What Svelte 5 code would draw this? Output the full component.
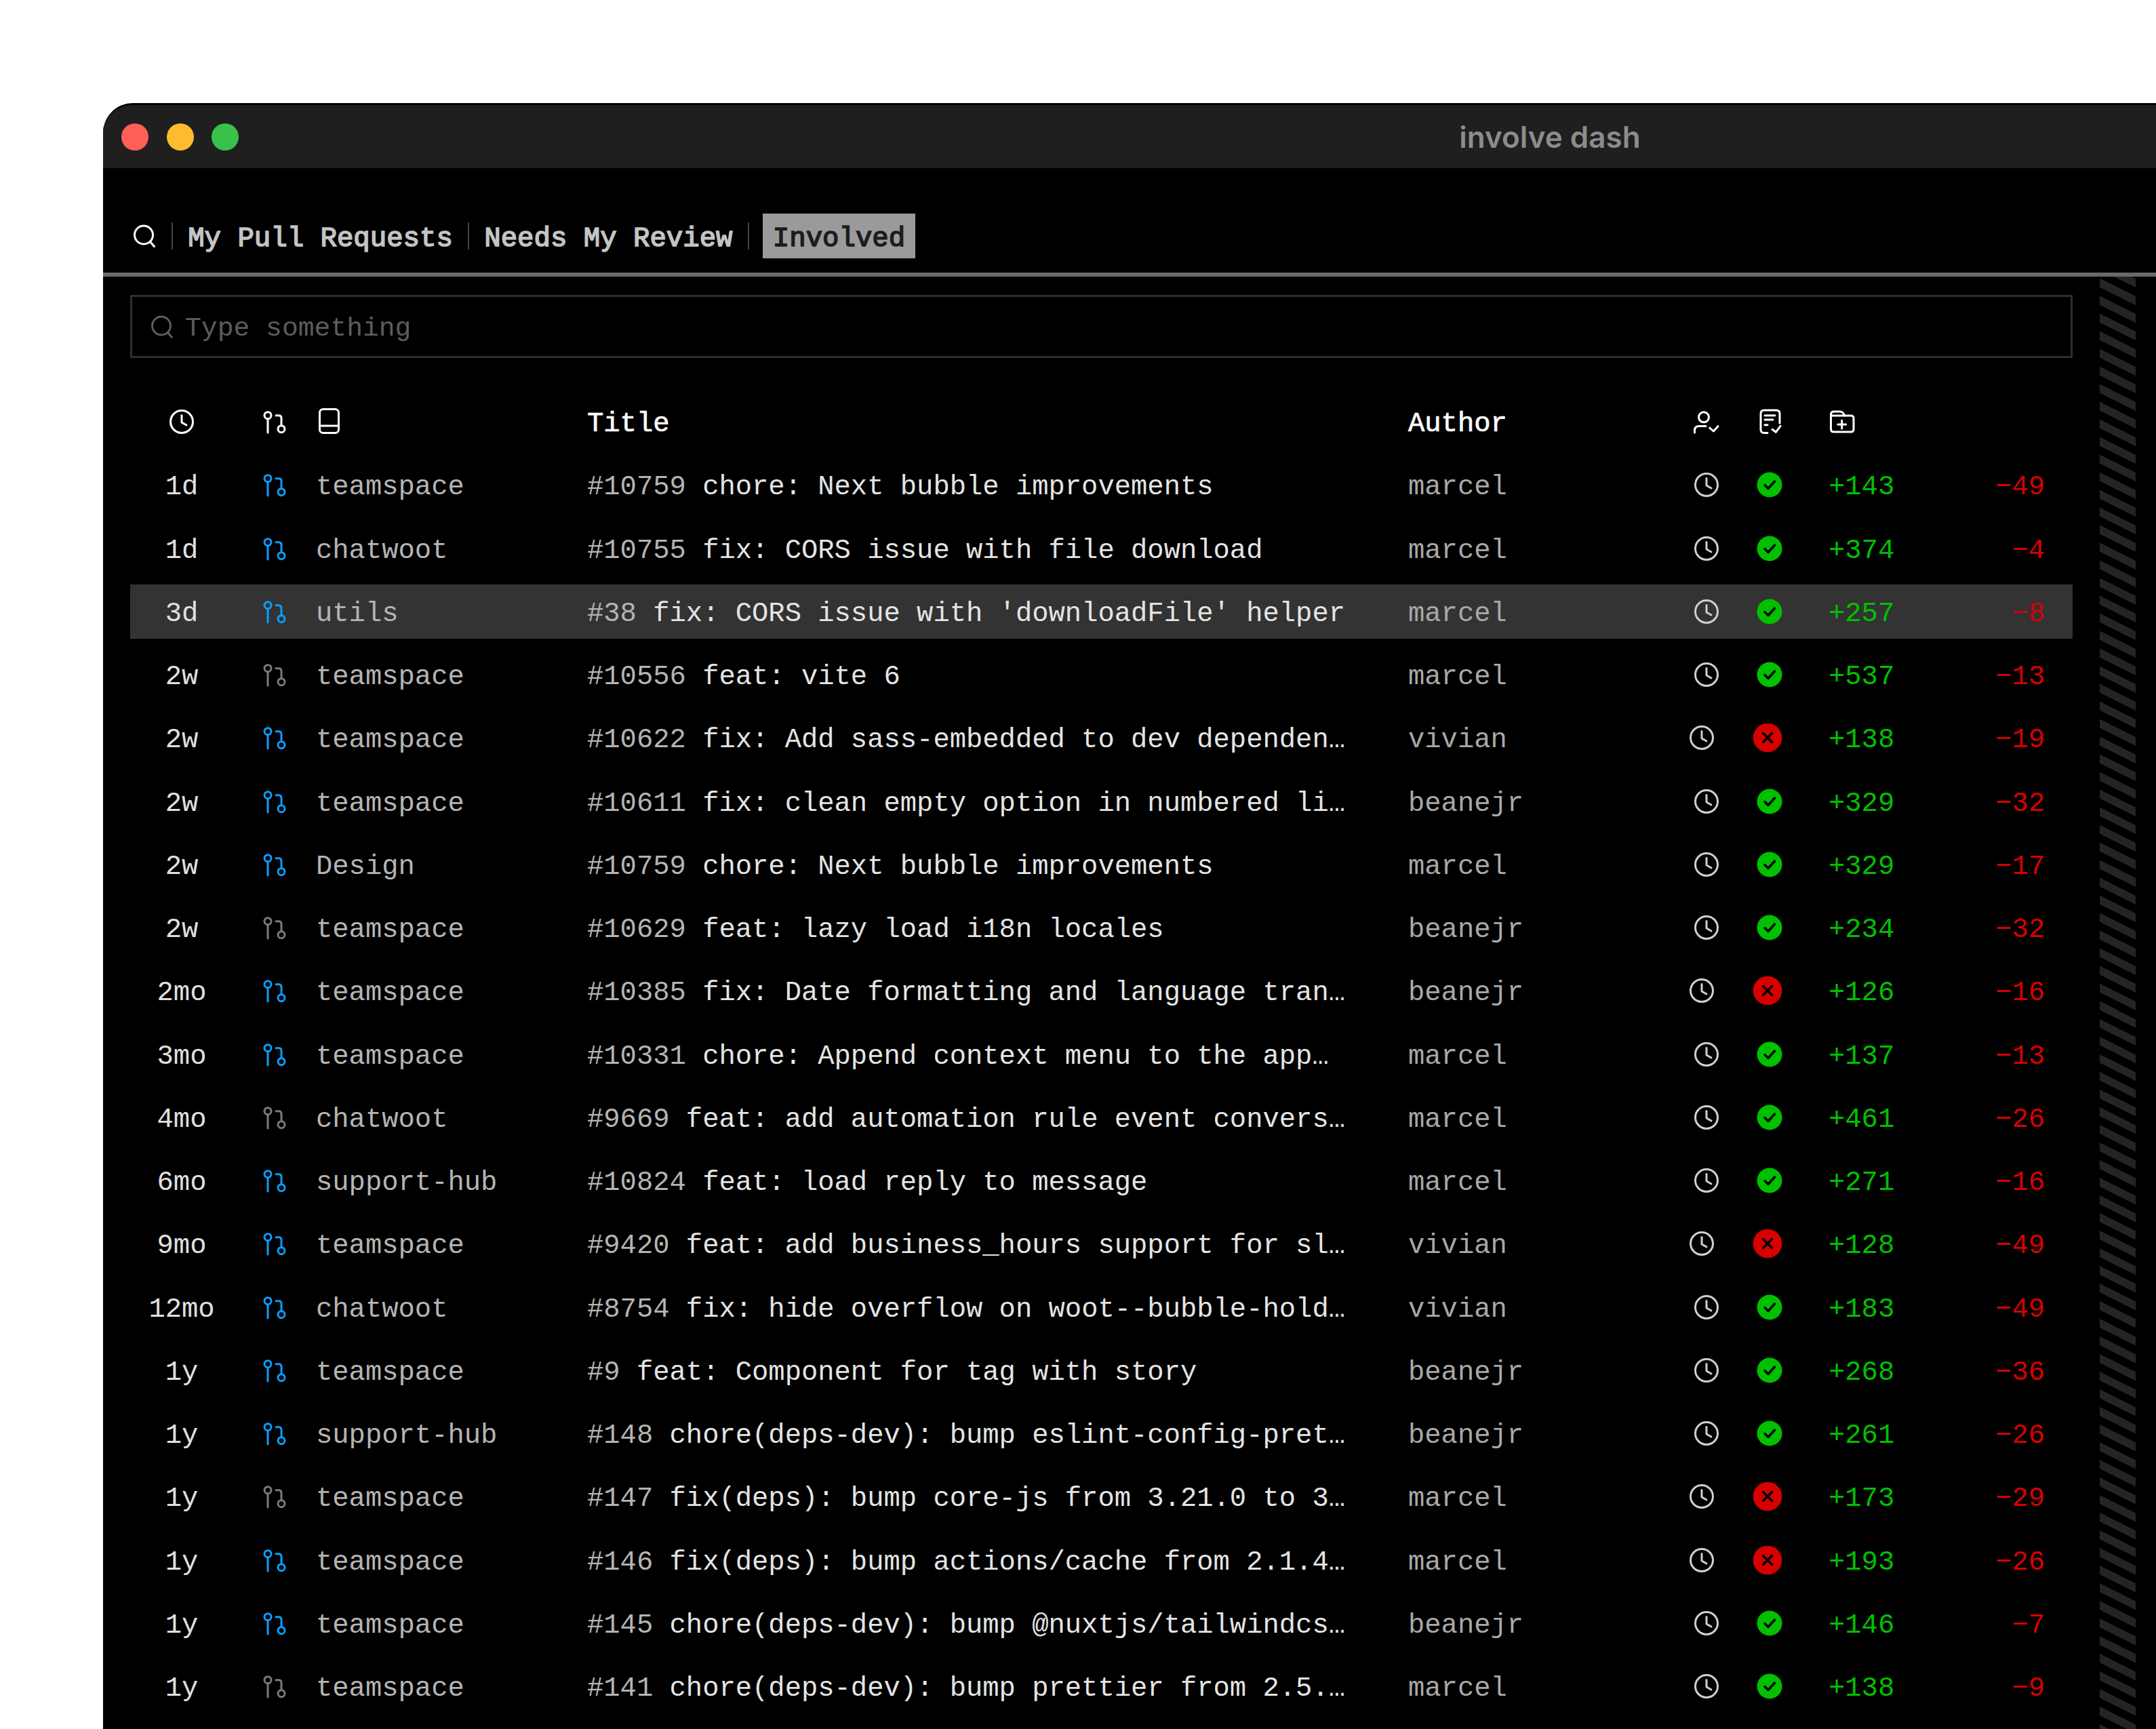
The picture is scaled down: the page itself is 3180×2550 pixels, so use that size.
<script>
	const prs = [
		{ age: '1d', open: true, repo: 'teamspace', num: '#10759', title: 'chore: Next bubble improvements', author: 'marcel', ok: true, add: 143, del: 49 },
		{ age: '1d', open: true, repo: 'chatwoot', num: '#10755', title: 'fix: CORS issue with file download', author: 'marcel', ok: true, add: 374, del: 4 },
		{ age: '3d', open: true, repo: 'utils', num: '#38', title: "fix: CORS issue with 'downloadFile' helper", author: 'marcel', ok: true, add: 257, del: 8 },
		{ age: '2w', open: false, repo: 'teamspace', num: '#10556', title: 'feat: vite 6', author: 'marcel', ok: true, add: 537, del: 13 },
		{ age: '2w', open: true, repo: 'teamspace', num: '#10622', title: 'fix: Add sass-embedded to dev dependen…', author: 'vivian', ok: false, add: 138, del: 19 },
		{ age: '2w', open: true, repo: 'teamspace', num: '#10611', title: 'fix: clean empty option in numbered li…', author: 'beanejr', ok: true, add: 329, del: 32 },
		{ age: '2w', open: true, repo: 'Design', num: '#10759', title: 'chore: Next bubble improvements', author: 'marcel', ok: true, add: 329, del: 17 },
		{ age: '2w', open: false, repo: 'teamspace', num: '#10629', title: 'feat: lazy load i18n locales', author: 'beanejr', ok: true, add: 234, del: 32 },
		{ age: '2mo', open: true, repo: 'teamspace', num: '#10385', title: 'fix: Date formatting and language tran…', author: 'beanejr', ok: false, add: 126, del: 16 },
		{ age: '3mo', open: true, repo: 'teamspace', num: '#10331', title: 'chore: Append context menu to the app…', author: 'marcel', ok: true, add: 137, del: 13 },
		{ age: '4mo', open: false, repo: 'chatwoot', num: '#9669', title: 'feat: add automation rule event convers…', author: 'marcel', ok: true, add: 461, del: 26 },
		{ age: '6mo', open: true, repo: 'support-hub', num: '#10824', title: 'feat: load reply to message', author: 'marcel', ok: true, add: 271, del: 16 },
		{ age: '9mo', open: true, repo: 'teamspace', num: '#9420', title: 'feat: add business_hours support for sl…', author: 'vivian', ok: false, add: 128, del: 49 },
		{ age: '12mo', open: true, repo: 'chatwoot', num: '#8754', title: 'fix: hide overflow on woot--bubble-hold…', author: 'vivian', ok: true, add: 183, del: 49 },
		{ age: '1y', open: true, repo: 'teamspace', num: '#9', title: 'feat: Component for tag with story', author: 'beanejr', ok: true, add: 268, del: 36 },
		{ age: '1y', open: true, repo: 'support-hub', num: '#148', title: 'chore(deps-dev): bump eslint-config-pret…', author: 'beanejr', ok: true, add: 261, del: 26 },
		{ age: '1y', open: false, repo: 'teamspace', num: '#147', title: 'fix(deps): bump core-js from 3.21.0 to 3…', author: 'marcel', ok: false, add: 173, del: 29 },
		{ age: '1y', open: true, repo: 'teamspace', num: '#146', title: 'fix(deps): bump actions/cache from 2.1.4…', author: 'marcel', ok: false, add: 193, del: 26 },
		{ age: '1y', open: true, repo: 'teamspace', num: '#145', title: 'chore(deps-dev): bump @nuxtjs/tailwindcs…', author: 'beanejr', ok: true, add: 146, del: 7 },
		{ age: '1y', open: false, repo: 'teamspace', num: '#141', title: 'chore(deps-dev): bump prettier from 2.5.…', author: 'marcel', ok: true, add: 138, del: 9 }
	];
	const selected = 2;
</script>

{#snippet search()}
	<svg width="36" height="36" viewBox="0 0 36 36" fill="none" stroke="currentColor" stroke-width="3" stroke-linecap="round">
		<circle cx="17" cy="16.5" r="13.5" />
		<path d="M26.5 26.5l6 7" />
	</svg>
{/snippet}

{#snippet clock()}
	<svg width="38" height="38" viewBox="0 0 38 38" fill="none" stroke="currentColor" stroke-width="3" stroke-linecap="round" stroke-linejoin="round">
		<circle cx="19" cy="19" r="16.5" />
		<path d="M19 9.5V20l7 4" />
	</svg>
{/snippet}

{#snippet prIcon()}
	<svg width="36" height="36" viewBox="0 0 36 36" fill="none" stroke="currentColor" stroke-width="3" stroke-linecap="round">
		<circle cx="7" cy="8.7" r="5" />
		<path d="M7 14v20" />
		<circle cx="27" cy="28.7" r="5" />
		<path d="M19 8.7h4q4 0 4 4v11" />
	</svg>
{/snippet}

<div class="page">
	<div class="window">
		<header class="titlebar">
			<span class="light red"></span>
			<span class="light yellow"></span>
			<span class="light green"></span>
			<span class="name">involve dash</span>
		</header>

		<div class="content">
			<nav class="tabs">
				<span class="tab-search">{@render search()}</span>
				<span class="tab"><span>My Pull Requests</span></span>
				<span class="tab"><span>Needs My Review</span></span>
				<span class="tab last"><b>Involved</b></span>
			</nav>

			<div class="body">
				<main>
					<div class="filter">
						{@render search()}
						<span>Type something</span>
					</div>

					<div class="row head">
						<span class="age">{@render clock()}</span>
						<span class="pr">{@render prIcon()}</span>
						<span class="repo">
							<svg width="32" height="40" viewBox="0 0 32 40" fill="none" stroke="currentColor" stroke-width="3">
								<rect x="1.5" y="1.5" width="28" height="35" rx="5" />
								<path d="M1.5 26h28" />
							</svg>
						</span>
						<span class="title">Title</span>
						<span class="author">Author</span>
						<span class="review">
							<svg width="40" height="36" viewBox="0 0 40 36" fill="none" stroke="currentColor" stroke-width="3" stroke-linecap="round" stroke-linejoin="round">
								<circle cx="16" cy="11.3" r="7.5" />
								<path d="M2.5 34v-3q0-6.5 6.500-6.500H19" />
								<path d="M24.700 27l5.600 5 6.700-7.300" />
							</svg>
						</span>
						<span class="ci">
							<svg width="36" height="40" viewBox="0 0 36 40" fill="none" stroke="currentColor" stroke-width="3" stroke-linecap="round" stroke-linejoin="round">
								<path d="M13 36.500H8q-5 0-5-5V8q0-5 5-5h18q5 0 5 5v14" />
								<path d="M20 31.300l5.300 4 6.700-9" />
								<path d="M9 10.700h15M9 17h12M9 24.700h4" />
							</svg>
						</span>
						<span class="add">
							<svg width="40" height="36" viewBox="0 0 40 36" fill="none" stroke="currentColor" stroke-width="3" stroke-linecap="round" stroke-linejoin="round">
								<path d="M3.500 9V7q0-4 4.500-4h9q3 0 5 3l2 3h9q4 0 4 4v16q0 4-4 4H8q-4.500 0-4.500-4z" />
								<path d="M3.500 9H24M19.700 16v12M13.700 22h12" />
							</svg>
						</span>
						<span class="del"></span>
					</div>

					{#each prs as pr, i}
						<div class="row" class:selected={i === selected}>
							<span class="age">{pr.age}</span>
							<span class="pr" class:open={pr.open}>{@render prIcon()}</span>
							<span class="repo">{pr.repo}</span>
							<span class="title"><span class="num">{pr.num}</span> {pr.title}</span>
							<span class="author">{pr.author}</span>
							<span class="review" class:shift={!pr.ok}>{@render clock()}</span>
							<span class="ci" class:shift={!pr.ok}>
								{#if pr.ok}
									<svg width="38" height="38" viewBox="0 0 38 38">
										<circle cx="19" cy="19" r="18.500" fill="#00c000" />
										<path d="M12 19.500l5 5 9.500-10.500" fill="none" stroke="#000" stroke-width="3.500" stroke-linecap="round" stroke-linejoin="round" />
									</svg>
								{:else}
									<svg width="44" height="44" viewBox="0 0 44 44">
										<circle cx="22" cy="22" r="21.300" fill="#d70000" />
										<path d="M15.500 15.500l13 13M28.500 15.500l-13 13" fill="none" stroke="#000" stroke-width="3.500" stroke-linecap="round" />
									</svg>
								{/if}
							</span>
							<span class="add">+{pr.add}</span>
							<span class="del">−{pr.del}</span>
						</div>
					{/each}
				</main>
				<div class="scrollbar"></div>
			</div>
		</div>
	</div>
</div>

<style>
	:global(body) {
		margin: 0;
		background: #fff;
	}

	.page {
		width: 3180px;
		height: 2550px;
		overflow: hidden;
		padding: 152px 0 0 152px;
		box-sizing: border-box;
	}

	.window {
		width: 4268px;
		height: 2398px;
		background: #000;
		border-top: 3px solid #000;
		border-radius: 44px 44px 0 0;
		overflow: hidden;
		box-sizing: border-box;
		font-family: "Liberation Mono", monospace;
		font-size: 40.5px;
	}

	.titlebar {
		position: relative;
		display: flex;
		align-items: center;
		gap: 26.500px;
		height: 93px;
		padding-left: 27px;
		background: #1f1f1f;
	}

	.light {
		width: 40px;
		height: 40px;
		border-radius: 50%;
	}
	.red { background: #ff5f57; }
	.yellow { background: #febc2e; }
	.green { background: #3ac14a; }

	.name {
		position: absolute;
		left: 0;
		right: 0;
		text-align: center;
		font-family: Inter, "Noto Sans", sans-serif;
		font-size: 44px;
		font-weight: 600;
		color: #8c8c8c;
	}

	.content {
		width: 3028px;
		height: 2302px;
		overflow: hidden;
	}

	.tabs {
		display: flex;
		align-items: center;
		height: 66px;
		margin-top: 67px;
		padding-left: 43px;
		font-size: 40.7px;
		color: #c4c4c4;
		-webkit-text-stroke: 1.600px currentColor;
	}

	.tab-search {
		display: flex;
		width: 58px;
		color: #fff;
		-webkit-text-stroke: 0;
	}

	.tab {
		display: flex;
		align-items: center;
		height: 40px;
		padding: 0 22.200px;
		border-left: 2px solid #444;
		white-space: pre;
	}

	.tab span {
		padding-top: 8px;
	}

	.tab b {
		display: flex;
		align-items: center;
		height: 66px;
		box-sizing: border-box;
		margin-left: -2px;
		padding: 8px 15px 0;
		background: #9a9a9a;
		color: #1c1c1c;
		font-weight: 400;
	}

	.body {
		display: flex;
		margin-top: 21px;
		border-top: 6px solid #6a6a6a;
		height: 2200px;
	}

	main {
		width: 2945px;
		flex: none;
		box-sizing: border-box;
		padding: 27px 40px 0;
	}

	.filter {
		display: flex;
		align-items: center;
		gap: 16px;
		height: 93px;
		padding-left: 26px;
		box-sizing: border-box;
		border: 3px solid #2e2e2e;
		font-size: 39.7px;
		color: #5c5c5c;
	}

	.filter span {
		padding-top: 5px;
	}

	.row {
		display: grid;
		grid-template-columns: 98px 149px 400px 1211px 403px 74px 112px 214px 136px;
		align-items: center;
		height: 80px;
		margin-bottom: 13.250px;
		padding: 0 41px 0 27px;
		white-space: pre;
	}

	.row > span {
		padding-top: 6px;
	}

	.head {
		margin-top: 54px;
		color: #fff;
	}

	.selected {
		background: #333;
	}

	.age {
		text-align: center;
		color: #e0e0e0;
	}

	.row span > svg {
		display: block;
	}

	.age svg {
		margin: 0 auto;
	}

	.row > .pr {
		padding: 0 0 0 71px;
		color: #7a7a7a;
	}
	.row > .pr.open { color: #0a9dff; }
	.head > .pr { color: #fff; }

	.repo { color: #b4b4b4; }
	.repo svg { margin-left: 4px; }
	.title { color: #e4e4e4; }
	.num { color: #b4b4b4; }
	.author { color: #a8a8a8; }

	.row > .review {
		display: flex;
		justify-content: center;
		padding-top: 0;
		color: #cfcfcf;
	}
	.row > .review.shift { padding-right: 14px; }

	.row > .ci {
		display: flex;
		justify-content: center;
		padding-top: 0;
	}
	.row > .ci.shift { padding-right: 6px; }
	.head > .ci svg { margin-left: 3px; }

	.row > .add {
		padding-left: 31px;
		color: #00c000;
	}
	.del {
		text-align: right;
		color: #d70000;
	}

	.head > .age, .head > .repo, .head > .add, .head > .del {
		padding-top: 0;
		color: #fff;
	}
	.head > .title, .head > .author, .head > .review {
		color: #fff;
	}
	.head > .title, .head > .author {
		-webkit-text-stroke: 0.7px currentColor;
	}

	.scrollbar {
		width: 53px;
		flex: none;
		background: repeating-linear-gradient(26.57deg, #242424 0 11.600px, #000 11.600px 23.260px);
	}
</style>
